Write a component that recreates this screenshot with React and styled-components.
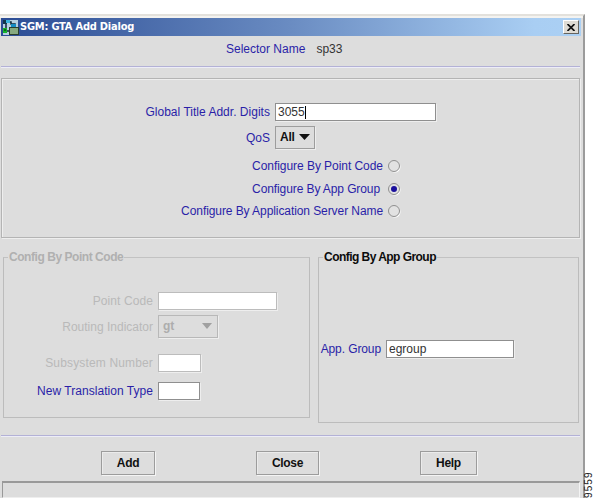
import React, { useState } from 'react'
import styled, { createGlobalStyle } from 'styled-components'

const GlobalStyle = createGlobalStyle`
  * { box-sizing: border-box; }
  body {
    margin: 0;
    background: #ffffff;
    overflow: hidden;
    font-family: "Liberation Sans", Arial, sans-serif;
    font-size: 12px;
    line-height: 14px;
  }
`

const Page = styled.div`
  display: flex;
  align-items: flex-end;
  width: 593px;
  height: 498px;
  overflow: hidden;
`

const Dialog = styled.div`
  display: flex;
  flex-direction: column;
  flex: none;
  width: 585px;
  height: 484px;
  padding: 2px 1px 0 1px;
  background: #dddddd;
  border-top: 2px solid #e3e1dc;
  border-right: 2px solid #9b9b9b;
  box-shadow: inset 0 2px 0 #f4f3f0;
`

const Title_Bar = styled.div`
  display: flex;
  align-items: center;
  flex: none;
  height: 18px;
  margin-right: 1px;
  padding: 0 2px 0 1px;
  background: linear-gradient(90deg, #2b4c94, #6a8cc2 50%, #a9cef3 92%, #abd0f4);

  svg { flex: none; }
`

const Title = styled.span`
  flex: 1;
  margin-left: 1px;
  color: #ffffff;
  font-family: "DejaVu Sans Condensed", "DejaVu Sans", sans-serif;
  font-stretch: condensed;
  font-size: 11px;
  font-weight: bold;
  letter-spacing: -0.22px;
  white-space: nowrap;
`

const Close_Box = styled.button`
  display: flex;
  align-items: center;
  justify-content: center;
  width: 16px;
  height: 14px;
  padding: 0;
  background: #dedbd4;
  border: 1px solid;
  border-color: #ffffff #66645f #66645f #ffffff;
`

const Label = styled.span`
  color: ${(p) => (p.$off ? '#b9b9b9' : '#2a1fa8')};
  letter-spacing: ${(p) => p.$track || 0}px;
  white-space: nowrap;
`

const Selector = styled.div`
  display: flex;
  flex: none;
  gap: 11px;
  height: 30px;
  padding: 6px 0 0 225px;
  color: #333333;
`

const Rule = styled.div`
  flex: none;
  height: 2px;
  margin-right: 2px;
  background: #b3b1d6;
  border-bottom: 1px solid #ededf7;
`

const Options = styled.div`
  display: flex;
  flex-direction: column;
  flex: none;
  height: 160px;
  margin: 10px 2px 0 0;
  padding-top: 24px;
  border: 1px solid #b4b4b4;
  box-shadow: inset 1px 1px 0 #eeeeee, 1px 1px 0 #eeeeee;
`

const Row = styled.div`
  display: grid;
  grid-template-columns: ${(p) => p.$col}px auto;
  justify-content: start;
  align-items: center;
  column-gap: ${(p) => p.$gap || 5}px;
  height: ${(p) => p.$h}px;
  margin-top: ${(p) => p.$top || 0}px;

  > ${Label} { justify-self: end; }
`

const Field = styled.div`
  display: flex;
  align-items: center;
  width: ${(p) => p.$w}px;
  height: 18px;
  padding-left: 2px;
  background: #ffffff;
  color: #333333;
  border: 1px solid ${(p) => (p.$off ? '#bcbcbc' : '#8f8f8f')};
  box-shadow: 1px 1px 0 #eeeeee;
`

const Caret = styled.i`
  width: 1px;
  height: 13px;
  background: #000000;
`

const Combo = styled.div`
  display: flex;
  align-items: center;
  justify-content: space-between;
  width: ${(p) => p.$w}px;
  height: 23px;
  padding: 0 ${(p) => p.$pad}px 1px 4px;
  color: ${(p) => (p.$off ? '#adadad' : '#111111')};
  font-weight: bold;
  letter-spacing: -0.2px;
  border: 1px solid ${(p) => (p.$off ? '#b8b8b8' : '#9d9d9d')};
  box-shadow: 1px 1px 0 #eeeeee;
`

const Radio = styled.button`
  display: flex;
  align-items: center;
  justify-content: center;
  width: 12px;
  height: 12px;
  padding: 0;
  background: #e2e2e2;
  border: 1px solid #8f8f8f;
  border-radius: 50%;
  box-shadow: 1px 1px 0 -0.5px #ffffff;

  &::after {
    content: "";
    width: 6px;
    height: 6px;
    border-radius: 50%;
    background: ${(p) => (p.$on ? '#1a0f9c' : 'transparent')};
  }
`

const Panels = styled.div`
  display: flex;
  align-items: flex-start;
  flex: none;
  gap: 8px;
  height: 197px;
  padding: 12px 0 0 2px;
`

const Panel = styled.fieldset`
  width: ${(p) => p.$w}px;
  height: ${(p) => p.$h}px;
  min-width: 0;
  margin: 0;
  padding: 0;
  border: 1px solid #bcbcbc;
  border-top-color: #c2c2c2;
`

const Legend = styled.legend`
  height: 14px;
  margin-left: 4px;
  padding: 0 1px;
  color: ${(p) => (p.$off ? '#b0b0b0' : '#0c0c0c')};
  font-weight: bold;
  letter-spacing: ${(p) => p.$track}px;
  white-space: nowrap;
`

const Actions = styled.div`
  display: flex;
  flex: none;
  height: 44px;
  padding: 14px 0 0 100px;
`

const Action = styled.button`
  width: ${(p) => p.$w}px;
  height: 24px;
  margin-right: ${(p) => p.$after || 0}px;
  padding: 0;
  background: #dddddd;
  color: #111111;
  font: bold 12px "Liberation Sans", Arial, sans-serif;
  letter-spacing: -0.3px;
  border: 1px solid #9c9c9c;
  box-shadow: 1px 1px 0 #f4f4f4, inset 1px 1px 0 #ebebeb;
`

const Status = styled.div`
  flex: 1;
  margin: 0 2px 0 1px;
  border: 1px solid #999999;
  border-top-width: 2px;
  border-right: 1px solid #f4f4f4;
  border-bottom-color: #eeeeee;
`

const Figure_No = styled.div`
  flex: none;
  width: 8px;
  height: 27px;
  color: #222222;
  font-size: 10px;
  letter-spacing: 1.1px;
  line-height: 8px;
  writing-mode: vertical-rl;
  transform: rotate(180deg);
  white-space: nowrap;
`

function AppIcon() {
  return (
    <svg width="17" height="17" viewBox="0 0 17 17">
      <rect x="1" y="1" width="15" height="15" fill="#b6cfe0" />
      <path d="M5 3h4v2h4v5M4 5v7h5" fill="none" stroke="#102a3c" strokeWidth="1.5" />
      <rect x="1" y="1" width="4" height="4" fill="#123548" />
      <rect x="4" y="1" width="4" height="3" fill="#39b3dc" />
      <rect x="9" y="5" width="5" height="4" fill="#168cc4" />
      <rect x="1" y="9" width="4" height="5" fill="#16b52a" />
      <rect x="2" y="10" width="2" height="2" fill="#0a6b18" />
      <rect x="7.5" y="8.5" width="9" height="7" fill="#86a97f" stroke="#2a3d2c" />
    </svg>
  )
}

function Arrow({ w, h, fill }) {
  return (
    <svg width={w} height={h} viewBox="0 0 10 5" preserveAspectRatio="none">
      <path d="M0 0h10L5 5z" fill={fill} />
    </svg>
  )
}

const choices = [
  { name: 'Configure By Point Code', track: -0.05, col: 381, gap: 5, top: 6 },
  { name: 'Configure By App Group', track: -0.1, col: 378, gap: 8, top: 0 },
  { name: 'Configure By Application Server Name', track: -0.08, col: 381, gap: 5, top: 0 },
]

export default function App() {
  const [mode, setMode] = useState(1)

  return (
    <Page>
      <GlobalStyle />
      <Dialog>
        <Title_Bar>
          <AppIcon />
          <Title>SGM: GTA Add Dialog</Title>
          <Close_Box aria-label="Close window">
            <svg width="8" height="7" viewBox="0 0 8 7">
              <path d="M0.5 0L7.5 7M7.5 0L0.5 7" stroke="#111" strokeWidth="1.7" />
            </svg>
          </Close_Box>
        </Title_Bar>

        <Selector>
          <Label>Selector Name</Label>
          <span>sp33</span>
        </Selector>
        <Rule />

        <Options>
          <Row $col={268} $h={18}>
            <Label $track={0.02}>Global Title Addr. Digits</Label>
            <Field $w={161}>3055<Caret /></Field>
          </Row>
          <Row $col={268} $h={23} $top={5}>
            <Label>QoS</Label>
            <Combo $w={40} $pad={4}>All<Arrow w={11} h={6} fill="#111111" /></Combo>
          </Row>
          {choices.map((c, i) => (
            <Row key={c.name} $col={c.col} $gap={c.gap} $h={22.4} $top={c.top}>
              <Label $track={c.track}>{c.name}</Label>
              <Radio $on={mode === i} onClick={() => setMode(i)} aria-label={c.name} />
            </Row>
          ))}
        </Options>

        <Panels>
          <Panel $w={307} $h={168}>
            <Legend $off $track={-0.45}>Config By Point Code</Legend>
            <Row $col={149} $h={18} $top={28}>
              <Label $off $track={0.1}>Point Code</Label>
              <Field $off $w={119} />
            </Row>
            <Row $col={149} $h={23} $top={5}>
              <Label $off>Routing Indicator</Label>
              <Combo $off $w={60} $pad={5}>gt<Arrow w={10} h={6} fill="#a0a0a0" /></Combo>
            </Row>
            <Row $col={149} $h={18} $top={16}>
              <Label $off $track={0.15}>Subsystem Number</Label>
              <Field $off $w={43} />
            </Row>
            <Row $col={149} $h={18} $top={10}>
              <Label $track={0.04}>New Translation Type</Label>
              <Field $w={42} />
            </Row>
          </Panel>

          <Panel $w={261} $h={173}>
            <Legend $track={-0.54}>Config By App Group</Legend>
            <Row $col={62} $h={18} $top={76}>
              <Label $track={-0.1}>App. Group</Label>
              <Field $w={128}>egroup</Field>
            </Row>
          </Panel>
        </Panels>

        <Rule />
        <Actions>
          <Action $w={54} $after={101}>Add</Action>
          <Action $w={63} $after={101}>Close</Action>
          <Action $w={57}>Help</Action>
        </Actions>
        <Status />
      </Dialog>
      <Figure_No>9559</Figure_No>
    </Page>
  )
}
